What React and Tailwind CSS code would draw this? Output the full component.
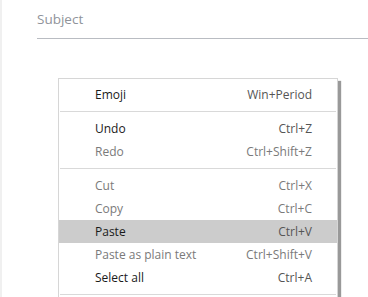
import React from "react";

const ITEMS = [
  { label: "Emoji", keys: "Win+Period" },
  "sep",
  { label: "Undo", keys: "Ctrl+Z" },
  { label: "Redo", keys: "Ctrl+Shift+Z", disabled: true },
  "sep",
  { label: "Cut", keys: "Ctrl+X", disabled: true },
  { label: "Copy", keys: "Ctrl+C", disabled: true },
  { label: "Paste", keys: "Ctrl+V", active: true },
  { label: "Paste as plain text", keys: "Ctrl+Shift+V", disabled: true },
  { label: "Select all", keys: "Ctrl+A" },
  "sep",
];

export default function App() {
  return (
    <div
      className="relative flex h-[297px] w-[368px] overflow-hidden bg-white"
      style={{ fontFamily: '"Open Sans", "Noto Sans", sans-serif' }}
    >
      <div className="w-[2px] shrink-0 bg-[#f0f0f0]" />
      <div className="flex-1 pl-[35px] pt-[9px]">
        <div className="border-b border-[#b9bcc2] pb-[9px] text-[13.5px] leading-[20px] text-[#8f939a]">
          Subject
        </div>
      </div>

      <div className="absolute left-[58px] top-[78px] h-[240px] w-[280px] border border-[#d6d6d6] bg-white py-[4px] shadow-[3px_3px_1px_rgba(0,0,0,0.4)]">
        {ITEMS.map((item, i) =>
          item === "sep" ? (
            <div key={i} className="mx-[1px] my-[5px] h-px bg-[#d9d9d9]" />
          ) : (
            <div
              key={i}
              className={`flex h-[23px] items-center justify-between pl-[36px] pr-[25px] text-[12px] ${
                item.active ? "bg-[#cccccc]" : ""
              } ${item.disabled ? "text-[#7a7a7a]" : "text-[#1a1a1a]"}`}
            >
              <span>{item.label}</span>
              <span className={item.disabled ? "text-[#7a7a7a]" : "text-[#555555]"}>{item.keys}</span>
            </div>
          )
        )}
      </div>
    </div>
  );
}
